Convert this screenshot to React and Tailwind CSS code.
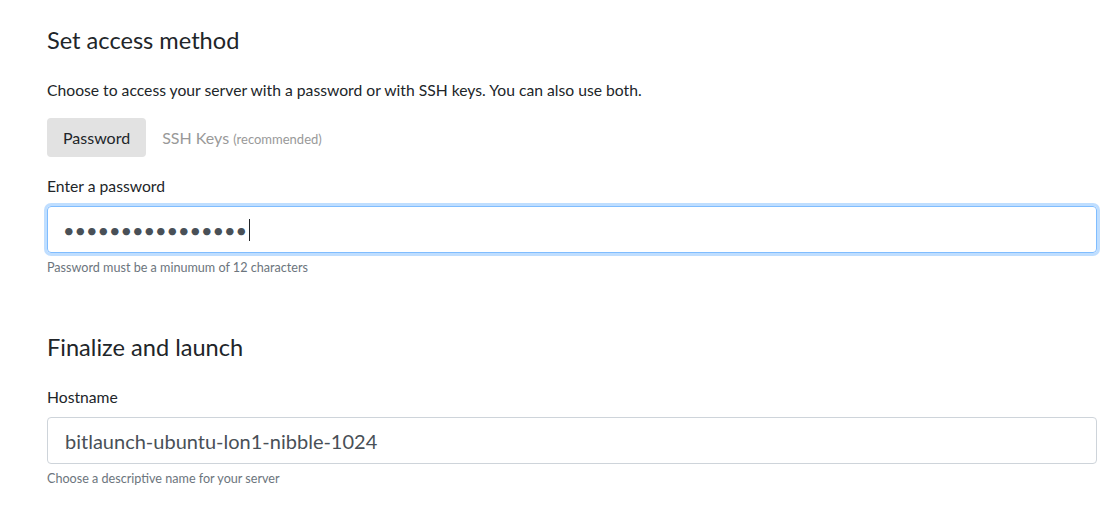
import React from 'react';

const App = () => {
    return (
        <div className="min-h-screen bg-white font-['Lato',sans-serif] text-[#212529]">
            <div className="pl-[47px] pr-[22px] pt-[26px]">
                <h2 className="text-[23.6px] leading-[28px] font-normal">Set access method</h2>
                <p className="mt-[25px] text-[15.7px] leading-[22px]">
                    Choose to access your server with a password or with SSH keys. You can also use both.
                </p>

                <div className="mt-[17px] flex items-center">
                    <button className="h-[39px] px-4 rounded bg-[#e2e2e2] text-[16px] text-[#212529]">Password</button>
                    <button className="h-[39px] px-4 text-[16px] text-[#999999]">
                        SSH Keys <span className="text-[13px]">(recommended)</span>
                    </button>
                </div>

                <label className="mt-[18px] block text-[15.7px] leading-[22px]">Enter a password</label>
                <div className="mt-[9px] h-[47px] flex items-center rounded border border-[#80bdff] shadow-[0_0_0_3px_rgba(0,123,255,0.25)] px-[15px] text-[20px] text-[#495057]">
                    <span className="tracking-[-0.1px]">••••••••••••••••</span>
                    <span className="ml-[2px] w-px h-[22px] bg-[#212529]" />
                </div>
                <p className="mt-[7px] text-[12.6px] leading-[16px] text-[#6c757d]">Password must be a minumum of 12 characters</p>

                <h2 className="mt-[57px] text-[23.6px] leading-[28px] font-normal">Finalize and launch</h2>
                <label className="mt-[25px] block text-[15.7px] leading-[22px]">Hostname</label>
                <input
                    className="mt-[9px] w-full h-[47px] rounded border border-[#ced4da] px-[17px] text-[20px] text-[#495057] outline-none"
                    defaultValue="bitlaunch-ubuntu-lon1-nibble-1024"
                />
                <p className="mt-[7px] text-[12.6px] leading-[16px] text-[#6c757d]">Choose a descriptive name for your server</p>
            </div>
        </div>
    );
};

export default App;
